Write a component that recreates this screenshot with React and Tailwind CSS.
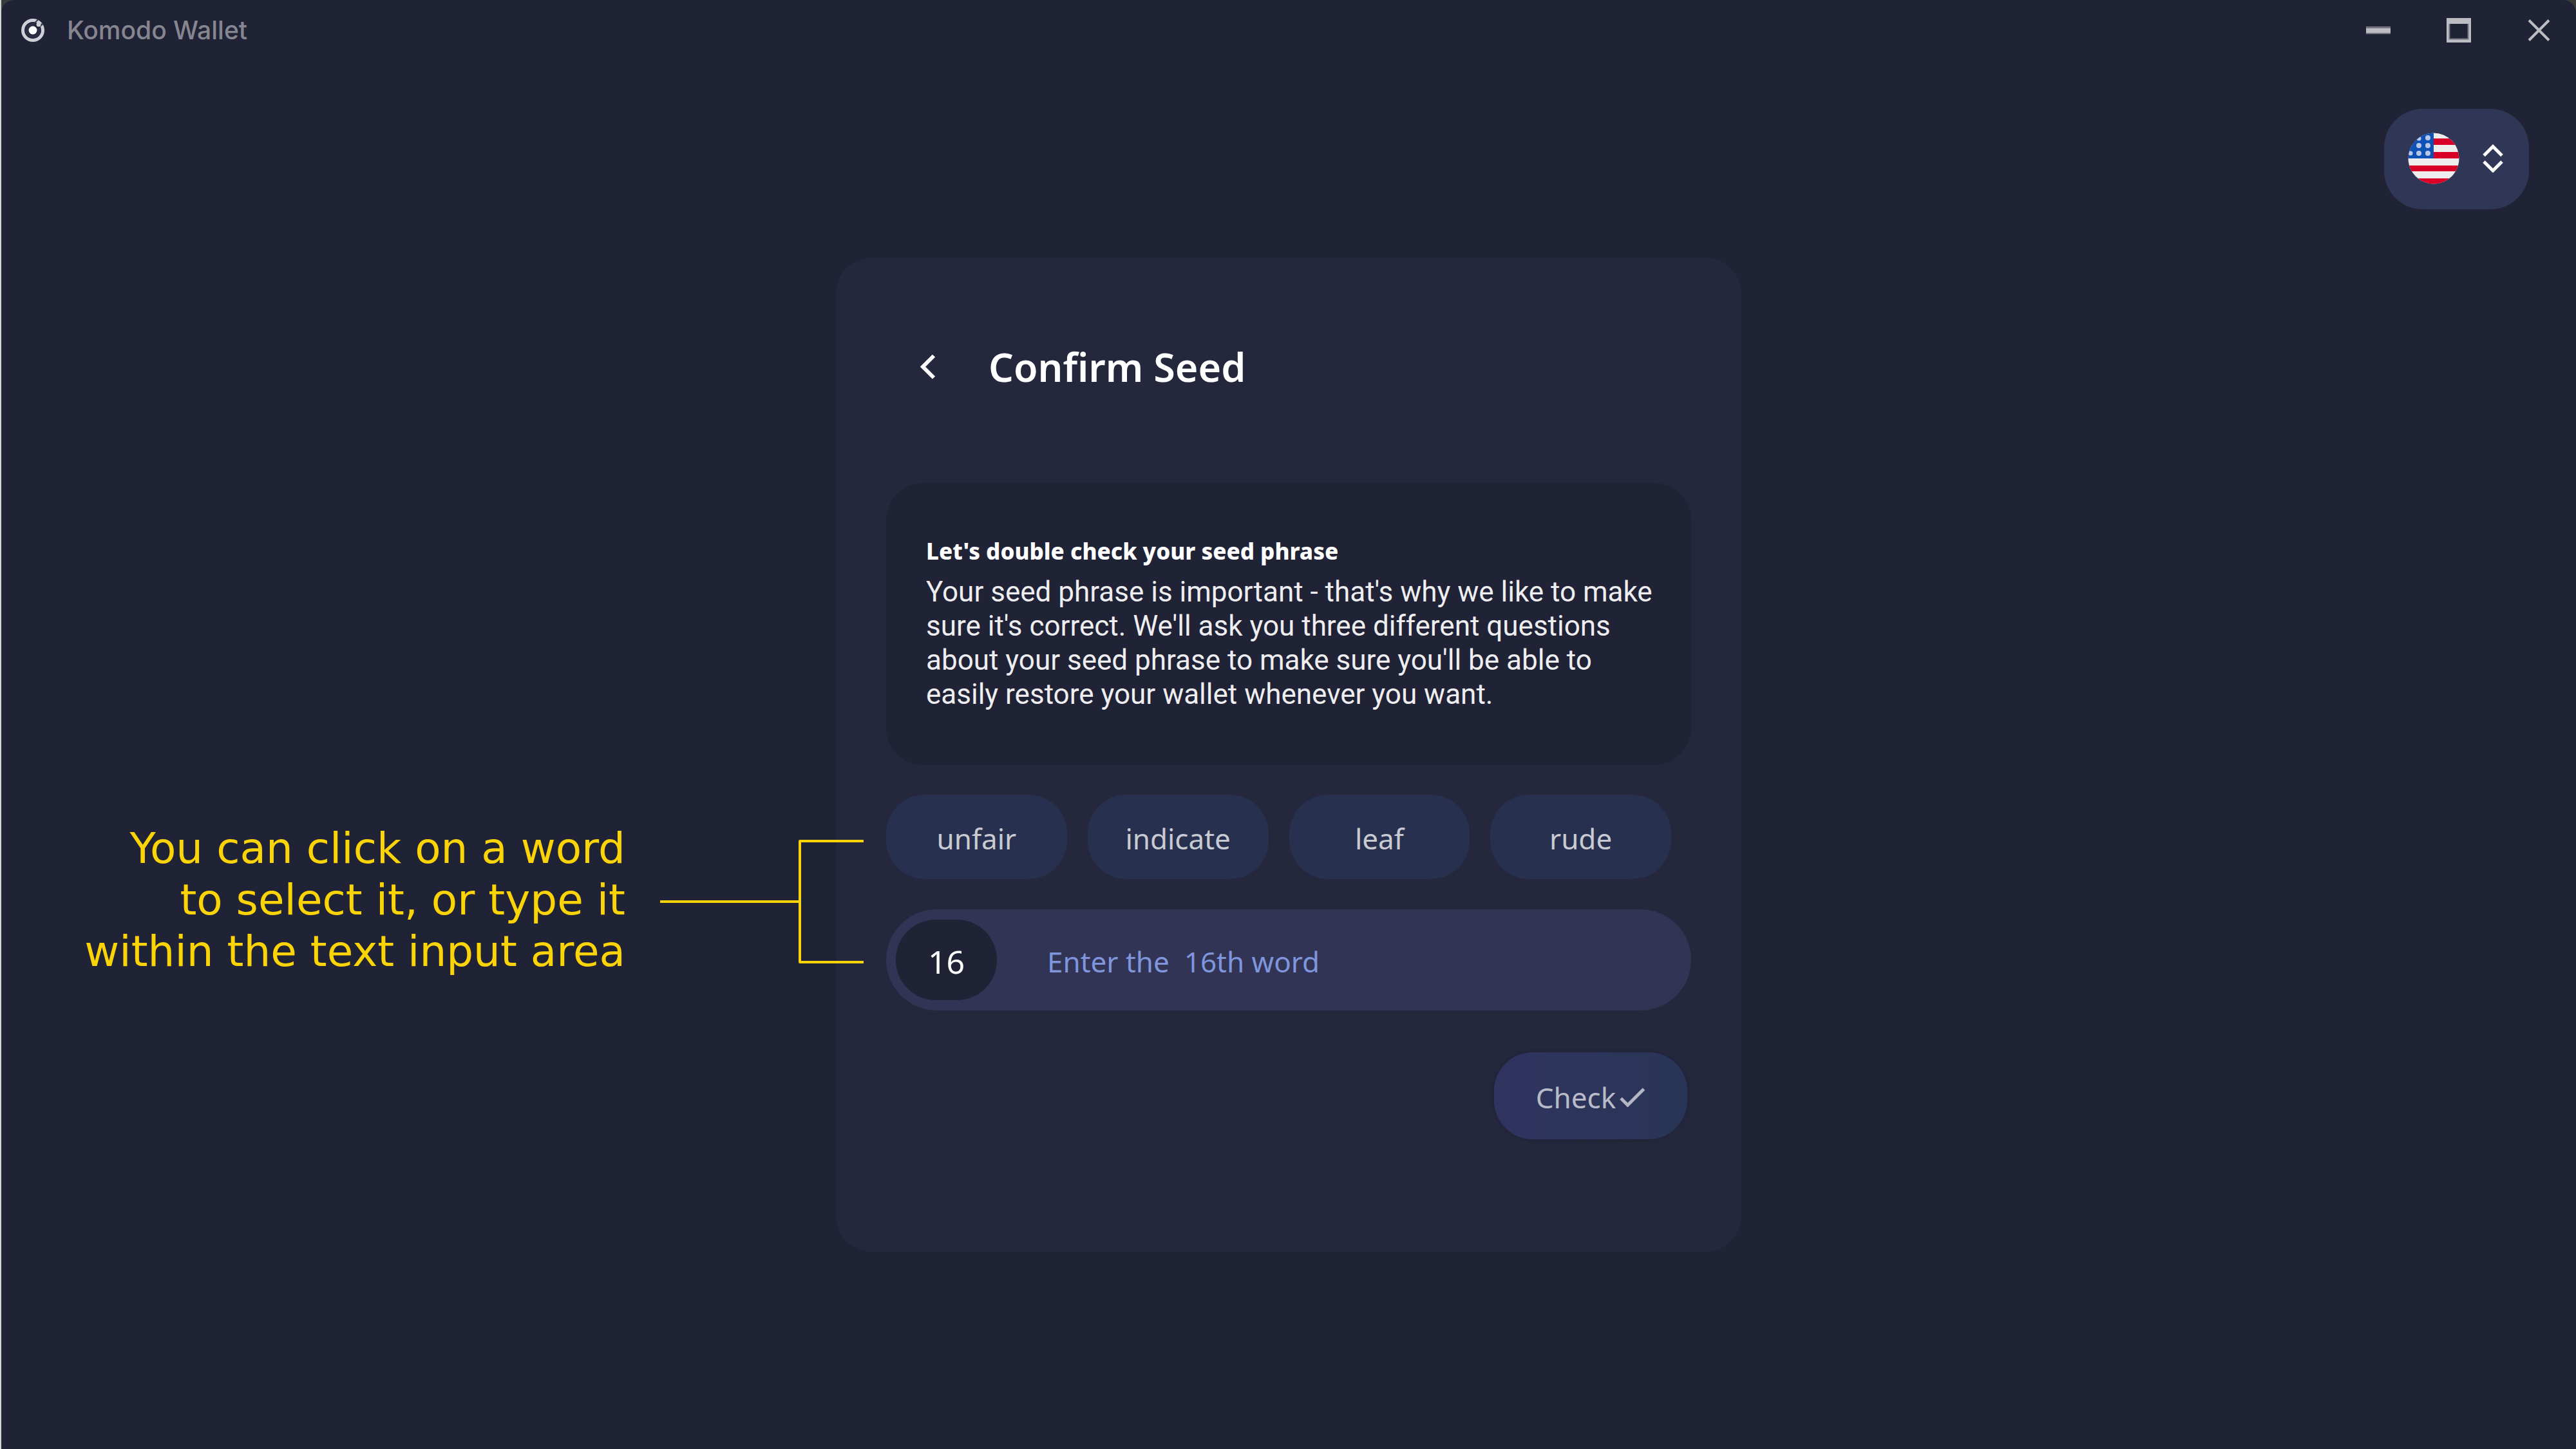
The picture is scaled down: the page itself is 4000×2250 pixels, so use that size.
const words = ["unfair", "indicate", "leaf", "rude"];

function AppLogo() {
  return (
    <svg viewBox="0 0 38 38" className="size-[38px]" fill="none" aria-hidden="true">
      <circle cx="19" cy="19" r="15.5" stroke="#cfcfd7" strokeWidth="5" />
      <path d="M21 8.5L27 2.5" stroke="#34364c" strokeWidth="2" />
      <path d="M29 13.5L34 9" stroke="#34364c" strokeWidth="3" />
      <path d="M22 10.2A9.6 9.6 0 1 0 28.2 16" stroke="#2c2e44" strokeWidth="4" />
      <circle cx="19" cy="19" r="6.5" fill="#ffffff" />
      <circle cx="28" cy="10" r="3.5" fill="#cfcfd7" />
    </svg>
  );
}

function TitleBar() {
  return (
    <header className="flex h-[94px] items-center justify-between pr-[38px] pl-[30px]">
      <div className="flex items-center gap-[34px]">
        <AppLogo />
        <span className="font-['Inter'] text-[39px] leading-[48px] font-medium text-[#85868f]">
          Komodo Wallet
        </span>
      </div>
      <div className="flex items-center gap-[87px]">
        <button type="button" aria-label="Minimize">
          <svg viewBox="0 0 38 38" className="size-[38px]" aria-hidden="true">
            <rect y="13" width="38" height="12" fill="#73747f" />
            <rect y="16" width="38" height="7" fill="#bcbcc2" />
          </svg>
        </button>
        <button type="button" aria-label="Maximize">
          <svg viewBox="0 0 38 38" className="size-[38px]" fill="none" aria-hidden="true">
            <path d="M0 0H38V38H0ZM4 9V33H34V9Z" fill="#bcbcc2" fillRule="evenodd" />
            <path d="M4.5 9V32.5H33.5V9" stroke="#73747f" strokeWidth="2" />
          </svg>
        </button>
        <button type="button" aria-label="Close">
          <svg viewBox="0 0 38 38" className="size-[38px]" fill="none" aria-hidden="true">
            <path d="M3 3.5L34 34.5M34 3.5L3 34.5" stroke="#bcbcc2" strokeWidth="4" />
          </svg>
        </button>
      </div>
    </header>
  );
}

function UsFlag() {
  return (
    <svg viewBox="0 0 80 80" className="size-20" aria-hidden="true">
      <clipPath id="flag-disc">
        <circle cx="40" cy="40" r="39.5" />
      </clipPath>
      <g clipPath="url(#flag-disc)">
        <rect width="80" height="80" fill="#eeeeee" />
        <rect y="9" width="80" height="10" fill="#d80027" />
        <rect y="30" width="80" height="10" fill="#d80027" />
        <rect y="51" width="80" height="9" fill="#d80027" />
        <rect y="71" width="80" height="10" fill="#d80027" />
        <rect width="40" height="40" fill="#0f52b5" />
        <g fill="#b9c8e8">
          <circle cx="17" cy="9" r="3.5" />
          <circle cx="31" cy="8" r="4" />
          <circle cx="17" cy="20" r="4" />
          <circle cx="31" cy="20" r="4" />
          <circle cx="4" cy="32" r="3.5" />
          <circle cx="17" cy="32" r="4" />
          <circle cx="31" cy="32" r="4" />
        </g>
      </g>
    </svg>
  );
}

function LanguageButton() {
  return (
    <button
      type="button"
      aria-label="Language: English (US)"
      className="flex items-center gap-9 rounded-[60px] bg-[#303756] pt-[37px] pr-10 pb-[39px] pl-[37px]"
    >
      <UsFlag />
      <svg viewBox="0 0 32 44" className="h-11 w-8" fill="none" stroke="#ffffff" strokeWidth="5" aria-hidden="true">
        <path d="M2 17.5L16 3.5L30 17.5M2 27L16 41L30 27" />
      </svg>
    </button>
  );
}

function Annotation() {
  return (
    <aside className="absolute top-0 right-full bottom-0 mr-[35px] flex items-center gap-[54px] pb-1">
      <p className="pb-1 text-right font-['DejaVu_Sans'] text-[66px] leading-[80px] whitespace-nowrap text-[#fbd407]">
        You can click on a word
        <br />
        to select it, or type it
        <br />
        within the text input area
      </p>
      <svg viewBox="0 0 316 194" className="h-[194px] w-[316px]" fill="none" stroke="#fbd407" strokeWidth="4" aria-hidden="true">
        <path d="M1 97H217M315 3H217V191H315" strokeLinecap="round" strokeLinejoin="round" />
      </svg>
    </aside>
  );
}

function SeedPanel() {
  return (
    <main className="w-full max-w-[1406px] rounded-[56px] bg-[#25273d] px-[78px] pt-[130px] pb-[175px]">
      <div className="flex h-20 items-center pl-[51px]">
        <button type="button" aria-label="Back">
          <svg viewBox="0 0 26 40" className="h-10 w-[26px]" fill="none" stroke="#ffffff" strokeWidth="6" aria-hidden="true">
            <path d="M23 2.5L6 19.5L23 36.5" />
          </svg>
        </button>
        <h1 className="ml-[82px] text-[61px] leading-[80px] font-semibold text-white">Confirm Seed</h1>
      </div>

      <section className="mt-[140px] rounded-[58px] bg-[#202236] pt-[82px] pr-12 pb-[83px] pl-[62px]">
        <h2 className="mb-[13px] text-[35px] leading-[48px] font-extrabold text-white">
          Let's double check your seed phrase
        </h2>
        <p className="font-['Roboto'] text-[44px] leading-[53px] text-[#eeeef0]">
          Your seed phrase is important - that's why we like to make sure it's correct. We'll ask you
          three different questions about your seed phrase to make sure you'll be able to easily
          restore your wallet whenever you want.
        </p>
      </section>

      <form onSubmit={(event) => event.preventDefault()}>
        <div className="relative mt-[46px]">
          <div className="grid grid-cols-4 gap-8 pr-[31px]">
            {words.map((word) => (
              <button
                key={word}
                type="button"
                className="h-[131px] rounded-[60px] bg-[#27304e] pt-1 text-[44px] leading-[60px] text-[#c9cbd2]"
              >
                {word}
              </button>
            ))}
          </div>
          <div className="mt-[47px] flex h-[157px] items-center rounded-[79px] bg-[#313455] pr-[79px] pl-[15px]">
            <label
              htmlFor="seed-word"
              className="flex h-[125px] w-[157px] shrink-0 items-center justify-center rounded-[62px] bg-[#202236] pt-1 text-[50px] leading-[60px] text-white"
            >
              16
            </label>
            <input
              id="seed-word"
              type="text"
              placeholder="Enter the  16th word"
              className="ml-[78px] h-20 min-w-0 flex-1 bg-transparent pt-1 text-[44px] leading-[60px] text-white outline-none placeholder:text-[#7f95dc]"
            />
          </div>
          <Annotation />
        </div>

        <div className="mt-[65px] flex justify-end pr-1.5">
          <button
            type="submit"
            className="flex h-[135px] w-[300px] items-center justify-center gap-1.5 rounded-[60px] bg-linear-to-r from-[#30345f] to-[#283556] pt-1 text-[44px] leading-[60px] text-[#b9bbc8] shadow-[0_0_4px_2px_#222439]"
          >
            Check
            <svg viewBox="0 0 40 30" className="h-[30px] w-10" fill="none" stroke="#b4b6c4" strokeWidth="5" aria-hidden="true">
              <path d="M2 16.5L12.5 27L37.5 2" />
            </svg>
          </button>
        </div>
      </form>
    </main>
  );
}

export default function App() {
  return (
    <div className="min-h-screen border-l-2 border-[#d4d4d6] bg-[#3a3a38] font-['Noto_Sans',sans-serif]">
      <div className="flex min-h-screen flex-col rounded-t-[20px] bg-[#202236]">
        <TitleBar />
        <div className="flex justify-end pt-[75px] pr-[73px]">
          <LanguageButton />
        </div>
        <div className="mt-[75px] mb-20 flex justify-center">
          <SeedPanel />
        </div>
      </div>
    </div>
  );
}
